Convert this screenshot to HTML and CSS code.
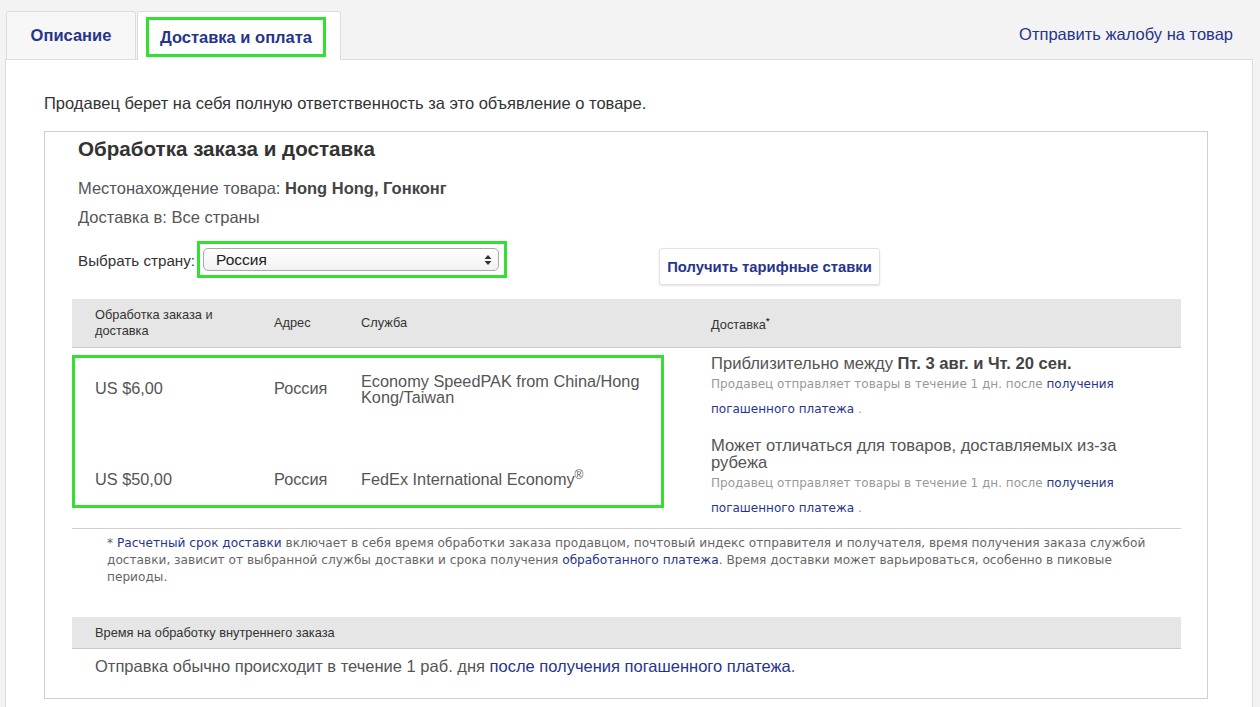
FILE: index.html
```html
<!DOCTYPE html>
<html lang="ru">
<head>
<meta charset="utf-8">
<title>Доставка и оплата</title>
<link rel="stylesheet" href="styles.css">
</head>
<body>
<div class="page">
  <div class="tabs">
    <div class="tab">Описание</div>
    <div class="tab tab-active"><span class="hl hl-tab">Доставка и оплата</span></div>
    <a class="report" href="#">Отправить жалобу на товар</a>
  </div>
  <div class="panel">
    <p class="intro">Продавец берет на себя полную ответственность за это объявление о товаре.</p>
    <div class="box">
      <h2 class="box-title">Обработка заказа и доставка</h2>
      <div class="fields">
        <div class="field">Местонахождение товара: <b>Hong Hong, Гонконг</b></div>
        <div class="field">Доставка в: Все страны</div>
      </div>
      <div class="select-row">
        <span class="select-label">Выбрать страну:</span>
        <div class="hl hl-select">
          <div class="select">
            <span>Россия</span>
            <svg class="arrows" width="8" height="12" viewBox="0 0 8 12"><path d="M4 1 L7.5 5 H0.5 Z M4 11 L0.5 7 H7.5 Z" fill="#333"/></svg>
          </div>
        </div>
        <button class="rates-btn" type="button">Получить тарифные ставки</button>
      </div>

      <table class="rates">
        <thead>
          <tr>
            <th class="c1">Обработка заказа и<br>доставка</th>
            <th class="c2">Адрес</th>
            <th class="c3">Служба</th>
            <th class="c4">Доставка<sup>*</sup></th>
          </tr>
        </thead>
        <tbody>
          <tr class="r1">
            <td class="c1">US $6,00</td>
            <td class="c2">Россия</td>
            <td class="c3 svc">Economy SpeedPAK from China/Hong Kong/Taiwan</td>
            <td class="c4">
              <div class="dlv">
                <div class="dlv-main">Приблизительно между <b>Пт. 3 авг. и Чт. 20 сен.</b></div>
                <div class="dlv-sub">Продавец отправляет товары в течение 1 дн. после <a href="#">получения погашенного платежа</a> .</div>
              </div>
            </td>
          </tr>
          <tr class="r2">
            <td class="c1">US $50,00</td>
            <td class="c2">Россия</td>
            <td class="c3 svc">FedEx International Economy<sup class="reg">®</sup></td>
            <td class="c4">
              <div class="dlv">
                <div class="dlv-main">Может отличаться для товаров, доставляемых из-за рубежа</div>
                <div class="dlv-sub">Продавец отправляет товары в течение 1 дн. после <a href="#">получения погашенного платежа</a> .</div>
              </div>
            </td>
          </tr>
        </tbody>
      </table>
      <div class="hl hl-rows"></div>

      <p class="footnote">* <a href="#">Расчетный срок доставки</a> включает в себя время обработки заказа продавцом, почтовый индекс отправителя и получателя, время получения заказа службой доставки, зависит от выбранной службы доставки и срока получения <a href="#">обработанного платежа</a>. Время доставки может варьироваться, особенно в пиковые периоды.</p>

      <div class="handling">
        <div class="handling-head">Время на обработку внутреннего заказа</div>
        <div class="handling-body">Отправка обычно происходит в течение 1 раб. дня <a href="#">после получения погашенного платежа</a>.</div>
      </div>
    </div>
  </div>
</div>
</body>
</html>
```

FILE: styles.css
```css
html, body {
  margin: 0;
  padding: 0;
}
body {
  background: #f3f3f3;
  font-family: "Liberation Sans", Arial, sans-serif;
  color: #333;
  overflow: hidden;
}
a {
  color: #26348b;
  text-decoration: none;
}
.page {
  margin-left: 5px;
  width: 1248px;
  padding-top: 11px;
}
.tabs {
  display: flex;
  align-items: flex-end;
  height: 48px;
  padding-left: 1px;
  padding-right: 20px;
  position: relative;
  z-index: 1;
}
.tab {
  box-sizing: border-box;
  height: 48px;
  display: flex;
  align-items: center;
  justify-content: center;
  border: 1px solid #dcdcdc;
  border-bottom: none;
  border-radius: 3px 3px 0 0;
  font-weight: bold;
  font-size: 16.5px;
  color: #26348b;
  background: #f7f7f7;
}
.tab:first-child {
  width: 130px;
  padding-bottom: 1px;
}
.tab-active {
  width: 204px;
  margin-left: 1px;
  height: 49px;
  margin-bottom: -1px;
  background: #fff;
  align-items: flex-start;
  padding-top: 5px;
}
.hl {
  box-sizing: border-box;
  border: 3px solid #31e031;
}
.hl-tab {
  display: flex;
  align-items: center;
  justify-content: center;
  width: 180px;
  height: 40px;
  margin-left: -6px;
}
.report {
  margin-left: auto;
  align-self: center;
  margin-top: -2px;
  font-size: 16.5px;
}
.panel {
  background: #fff;
  border: 1px solid #dcdcdc;
  padding: 34px 44px 40px 38px;
}
.intro {
  margin: 0;
  font-size: 16.5px;
  line-height: 18px;
  color: #333;
}
.box {
  position: relative;
  margin-top: 19px;
  border: 1px solid #cfcfcf;
  padding: 5px 26px 22px 27px;
}
.box-title {
  margin: 0 0 0 6px;
  font-size: 20.6px;
  line-height: 24px;
  font-weight: bold;
  color: #333;
}
.fields {
  margin: 13px 0 0 6px;
}
.field {
  font-size: 16.5px;
  line-height: 29px;
  color: #555;
}
.field b {
  color: #444;
}
.select-row {
  display: flex;
  align-items: flex-start;
  margin-top: 9px;
  padding-left: 6px;
}
.select-label {
  font-size: 15.2px;
  color: #333;
  margin-top: 11px;
  margin-right: 2px;
}
.hl-select {
  width: 310px;
  height: 37px;
  padding: 4px 5px 0 3px;
}
.select {
  box-sizing: border-box;
  height: 23px;
  border: 1px solid #a9a9a9;
  border-radius: 5px;
  background: linear-gradient(#fff, #f1f1f1);
  display: flex;
  align-items: center;
  justify-content: space-between;
  padding: 0 6px 0 12px;
  font-size: 15.5px;
  color: #222;
}
.rates-btn {
  margin-left: 152px;
  margin-top: 7px;
  width: 221px;
  height: 37px;
  border: 1px solid #e2e2e2;
  border-radius: 3px;
  background: #fff;
  box-shadow: 0 1px 2px rgba(0,0,0,0.12);
  font-family: "Liberation Sans", Arial, sans-serif;
  font-weight: bold;
  font-size: 14.8px;
  color: #26348b;
  padding: 0;
}
.rates {
  width: 100%;
  margin-top: 14px;
  border-collapse: collapse;
  table-layout: fixed;
}
.rates th {
  background: #e6e6e6;
  border-bottom: 1px solid #c9c9c9;
  height: 48px;
  font-size: 12.8px;
  line-height: 16px;
  font-weight: normal;
  text-align: left;
  color: #333;
  padding: 0;
  vertical-align: middle;
}
.rates th sup {
  font-size: 9px;
  font-weight: bold;
}
.rates .c1 {
  width: 179px;
  padding-left: 23px;
}
.rates .c2 {
  width: 87px;
}
.rates .c3 {
  width: 350px;
}
.rates td {
  padding: 0;
  vertical-align: middle;
  font-size: 16.3px;
  color: #555;
}
.rates tbody tr:last-child td {
  border-bottom: 1px solid #cfcfcf;
}
.r1 td {
  padding-top: 7px;
  padding-bottom: 8px;
}
.r2 td {
  padding-top: 7px;
  padding-bottom: 7px;
}
.svc {
  line-height: 16px;
  padding-right: 10px !important;
}
.reg {
  font-size: 12px;
  line-height: 0;
  vertical-align: 6px;
}
.dlv {
  width: 420px;
}
.dlv-main {
  font-size: 16.6px;
  line-height: 17px;
  color: #555;
}
.dlv-main b {
  color: #444;
}
.dlv-sub {
  font-family: "DejaVu Sans", Verdana, sans-serif;
  font-size: 12px;
  line-height: 25px;
  color: #999;
}
.hl-rows {
  position: absolute;
  left: 27px;
  top: 223px;
  width: 592px;
  height: 153px;
  pointer-events: none;
}
.footnote {
  margin: 0;
  padding: 6px 30px 0 35px;
  font-family: "DejaVu Sans", Verdana, sans-serif;
  font-size: 12.15px;
  line-height: 17px;
  color: #666;
}
.handling {
  margin-top: 31px;
}
.handling-head {
  box-sizing: border-box;
  height: 32px;
  background: #e6e6e6;
  border-bottom: 1px solid #c9c9c9;
  font-size: 12.8px;
  line-height: 31px;
  padding-left: 23px;
  color: #333;
}
.handling-body {
  margin-top: 7px;
  padding-left: 23px;
  font-size: 16.5px;
  line-height: 20px;
  color: #555;
}
```
